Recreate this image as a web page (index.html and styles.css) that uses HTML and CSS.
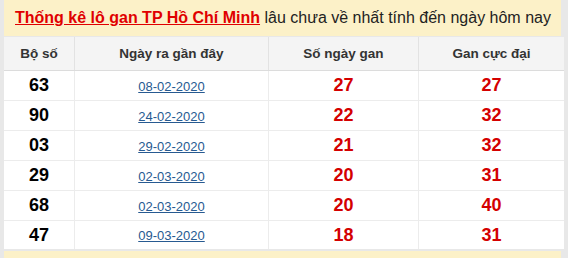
FILE: index.html
```html
<!DOCTYPE html>
<html lang="vi">
<head>
<meta charset="utf-8">
<link rel="stylesheet" href="styles.css">
</head>
<body>
<div class="box">
  <h2 class="title"><a class="title-link" href="#">Thống kê lô gan TP Hồ Chí Minh</a> lâu chưa về nhất tính đến ngày hôm nay</h2>
  <table class="gan">
    <thead>
      <tr><th class="c1">Bộ số</th><th class="c2">Ngày ra gần đây</th><th class="c3">Số ngày gan</th><th class="c4">Gan cực đại</th></tr>
    </thead>
    <tbody>
      <tr><td class="num">63</td><td><a class="date" href="#">08-02-2020</a></td><td class="red">27</td><td class="red">27</td></tr>
      <tr><td class="num">90</td><td><a class="date" href="#">24-02-2020</a></td><td class="red">22</td><td class="red">32</td></tr>
      <tr><td class="num">03</td><td><a class="date" href="#">29-02-2020</a></td><td class="red">21</td><td class="red">32</td></tr>
      <tr><td class="num">29</td><td><a class="date" href="#">02-03-2020</a></td><td class="red">20</td><td class="red">31</td></tr>
      <tr><td class="num">68</td><td><a class="date" href="#">02-03-2020</a></td><td class="red">20</td><td class="red">40</td></tr>
      <tr><td class="num">47</td><td><a class="date" href="#">09-03-2020</a></td><td class="red">18</td><td class="red">31</td></tr>
    </tbody>
  </table>
  <div class="footer-band"></div>
</div>
</body>
</html>
```

FILE: styles.css
```css
html, body {
  margin: 0;
  padding: 0;
  background: #e8e8e8;
  font-family: "Liberation Sans", Arial, sans-serif;
}
.box {
  margin-left: 4px;
  width: 557px;
}
.title {
  margin: 0;
  height: 36px;
  padding: 0 0 0 11px;
  box-sizing: border-box;
  background: #fcf1c8;
  font-size: 16px;
  font-weight: normal;
  line-height: 36px;
  color: #222;
  white-space: nowrap;
}
.title-link {
  color: #e00000;
  font-weight: bold;
  text-decoration: underline;
}
.gan {
  width: 557px;
  border-collapse: collapse;
  table-layout: fixed;
  background: #fff;
  margin-top: 1px;
}
.gan th {
  height: 33px;
  padding: 0;
  background: #f4f4f4;
  font-size: 13.5px;
  font-weight: bold;
  color: #333;
  border-right: 1px solid #e2e2e2;
  border-bottom: 1px solid #dcdcdc;
}
.c1 { width: 70px; }
.c2 { width: 193px; }
.c3 { width: 149px; }
.c4 { width: 145px; }
.gan th:last-child, .gan td:last-child { border-right: none; }
.gan td {
  height: 29px;
  padding: 0;
  text-align: center;
  border-right: 1px solid #ececec;
  border-bottom: 1px solid #ececec;
}
.gan tbody tr:last-child td { border-bottom: none; height: 28px; }
.num {
  font-size: 18px;
  font-weight: bold;
  color: #000;
}
.red {
  font-size: 18px;
  font-weight: bold;
  color: #d40000;
}
.date {
  font-size: 13px;
  color: #275a91;
  text-decoration: underline;
}
.footer-band {
  margin-top: 2px;
  height: 10px;
  background: #fcf1c8;
}
```
